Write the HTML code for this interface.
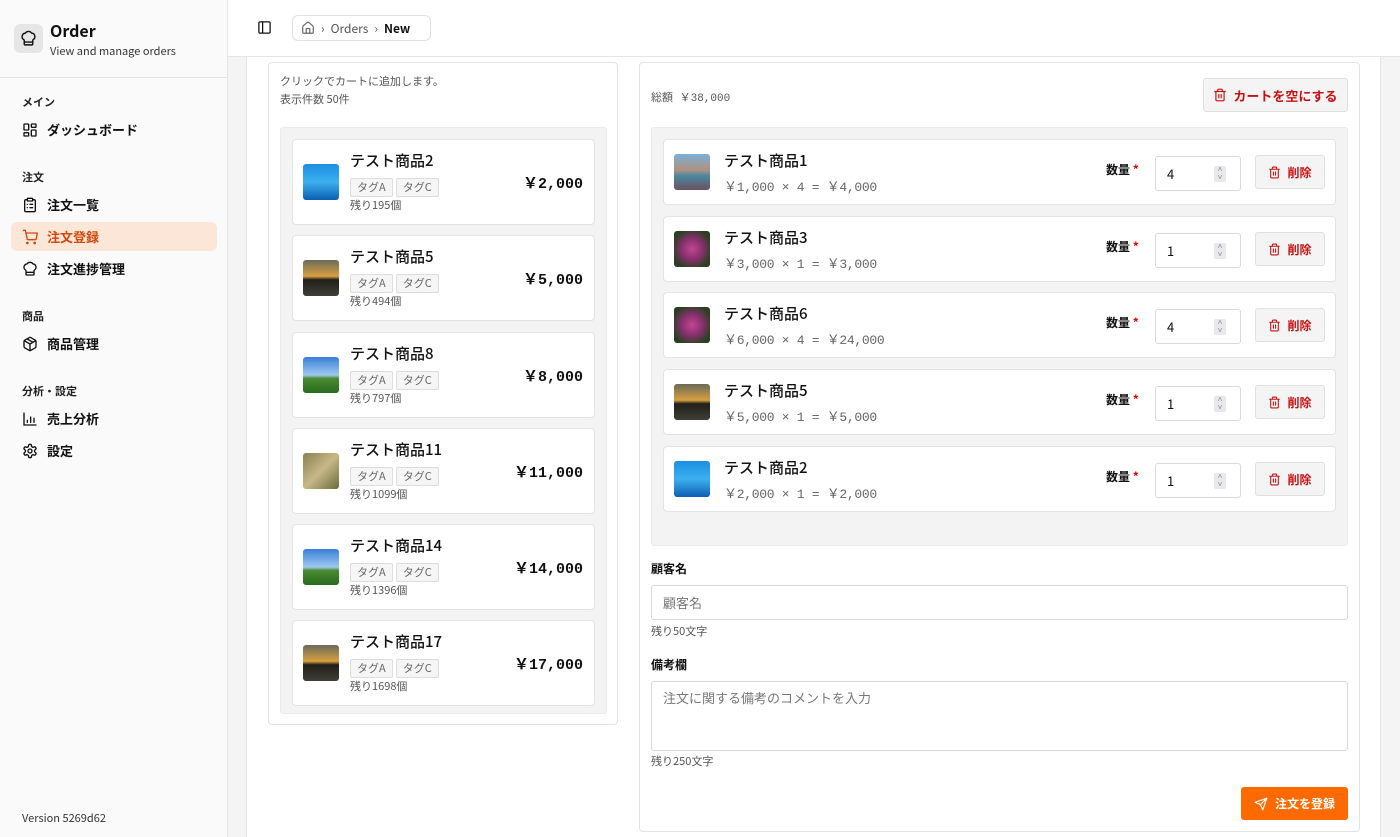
<!DOCTYPE html>
<html><head><meta charset="utf-8"><style>
*{box-sizing:border-box;margin:0;padding:0}
body{width:1400px;height:837px;overflow:hidden;font-family:"Noto Sans CJK JP","Liberation Sans",sans-serif;color:#111;background:#f4f4f4;position:relative;font-size:13px}
.a{position:absolute}
.mono{font-family:"Liberation Mono","Noto Sans CJK JP",monospace}
#side{left:0;top:0;width:228px;height:837px;background:#fafafa;border-right:1px solid #e5e5e5}
.sec{position:absolute;left:22px;font-size:11px;font-weight:bold;color:#222}
.nav{position:absolute;left:11px;width:206px;height:29px;display:flex;align-items:center;padding-left:11px;font-size:13px;font-weight:bold;gap:9px}
.nav svg{width:16px;height:16px}
#head{left:228px;top:0;width:1172px;height:57px;background:#fff;border-bottom:1px solid #e5e5e5}
#panel{left:246px;top:57px;width:1135px;height:780px;background:#fff;border-left:1px solid #e5e5e5;border-right:1px solid #e5e5e5}
.card{background:#fff;border:1px solid #e3e3e3;border-radius:4px}
.gray{background:#f3f3f3;border:1px solid #ebebeb;border-radius:3px}
.pi{left:292px;width:303px;height:86px}
.img{width:36px;height:36px;border-radius:3px}
.tag{display:inline-block;border:1px solid #ddd;background:#f5f5f5;border-radius:2px;font-size:11px;color:#666;padding:0 6px;height:19px;line-height:17px;margin-right:3px}
.ci{left:663px;width:673px;height:66px}
.qty{border:1px solid #d9d9d9;border-radius:3px;width:86px;height:35px;background:#fff}
.del{border:1px solid #e0e0e0;background:#f4f4f4;border-radius:3px;width:70px;height:34px;color:#c81010;font-weight:bold;font-size:12px;display:flex;align-items:center;justify-content:center;gap:6px}
.nm{font-size:15px;font-weight:500;line-height:20px}
</style></head><body>
<div id="side" class="a">
 <div class="a" style="left:14px;top:24px;width:29px;height:29px;background:#e6e6e6;border-radius:6px"></div>
 <svg class="a" style="left:20px;top:30px" width="17" height="17" viewBox="0 0 24 24" fill="none" stroke="#111" stroke-width="2" stroke-linecap="round" stroke-linejoin="round"><path d="M17 21a1 1 0 0 0 1-1v-5.35c0-.46.3-.85.7-1.1a5 5 0 0 0-2.3-9.2A5 5 0 0 0 12 2a5 5 0 0 0-4.4 2.4 5 5 0 0 0-2.3 9.2c.4.25.7.64.7 1.1V20a1 1 0 0 0 1 1z"/><path d="M6 17h12"/></svg>
 <div class="a" style="left:50px;top:18px;font-size:16px;font-weight:bold">Order</div>
 <div class="a" style="left:50px;top:43px;font-size:11px;color:#333">View and manage orders</div>
 <div class="a" style="left:0;top:77px;width:228px;border-top:1px solid #e5e5e5"></div>
 <div class="sec" style="top:94px">メイン</div>
 <div class="nav" style="top:115px"><svg viewBox="0 0 24 24" fill="none" stroke="#111" stroke-width="2"><rect x="3" y="3" width="7" height="9" rx="1"/><rect x="14" y="3" width="7" height="5" rx="1"/><rect x="14" y="12" width="7" height="9" rx="1"/><rect x="3" y="16" width="7" height="5" rx="1"/></svg>ダッシュボード</div>
 <div class="sec" style="top:169px">注文</div>
 <div class="nav" style="top:190px"><svg viewBox="0 0 24 24" fill="none" stroke="#111" stroke-width="2" stroke-linecap="round"><rect x="8" y="2" width="8" height="4" rx="1"/><path d="M16 4h2a2 2 0 0 1 2 2v14a2 2 0 0 1-2 2H6a2 2 0 0 1-2-2V6a2 2 0 0 1 2-2h2M12 11h4M12 16h4M8 11h.01M8 16h.01"/></svg>注文一覧</div>
 <div class="nav" style="top:222px;background:#fbe6d8;border-radius:6px;color:#d4480c"><svg viewBox="0 0 24 24" fill="none" stroke="#d4480c" stroke-width="2" stroke-linecap="round" stroke-linejoin="round"><circle cx="8" cy="21" r="1"/><circle cx="19" cy="21" r="1"/><path d="M2 2h3l2.7 12.4a2 2 0 0 0 2 1.6h9.7a2 2 0 0 0 2-1.6L23 6H6"/></svg>注文登録</div>
 <div class="nav" style="top:254px"><svg viewBox="0 0 24 24" fill="none" stroke="#111" stroke-width="2" stroke-linejoin="round"><path d="M17 21a1 1 0 0 0 1-1v-5.35c0-.46.3-.85.7-1.1a5 5 0 0 0-2.3-9.2A5 5 0 0 0 12 2a5 5 0 0 0-4.4 2.4 5 5 0 0 0-2.3 9.2c.4.25.7.64.7 1.1V20a1 1 0 0 0 1 1z"/><path d="M6 17h12"/></svg>注文進捗管理</div>
 <div class="sec" style="top:308px">商品</div>
 <div class="nav" style="top:329px"><svg viewBox="0 0 24 24" fill="none" stroke="#111" stroke-width="2" stroke-linejoin="round"><path d="M21 8a2 2 0 0 0-1-1.7l-7-4a2 2 0 0 0-2 0l-7 4A2 2 0 0 0 3 8v8a2 2 0 0 0 1 1.7l7 4a2 2 0 0 0 2 0l7-4a2 2 0 0 0 1-1.7z"/><path d="M3.3 7 12 12l8.7-5M12 22V12M7.5 4.3l9 5.2"/></svg>商品管理</div>
 <div class="sec" style="top:383px">分析・設定</div>
 <div class="nav" style="top:404px"><svg viewBox="0 0 24 24" fill="none" stroke="#111" stroke-width="2" stroke-linecap="round"><path d="M3 3v18h18M8 17v-3M13 17V9M18 17v-6"/></svg>売上分析</div>
 <div class="nav" style="top:436px"><svg viewBox="0 0 24 24" fill="none" stroke="#111" stroke-width="2"><path d="M12.2 2h-.4a2 2 0 0 0-2 2v.2a2 2 0 0 1-1 1.7l-.4.3a2 2 0 0 1-2 0l-.2-.1a2 2 0 0 0-2.7.7l-.2.4a2 2 0 0 0 .7 2.7l.2.1a2 2 0 0 1 1 1.7v.5a2 2 0 0 1-1 1.8l-.2.1a2 2 0 0 0-.7 2.7l.2.4a2 2 0 0 0 2.7.7l.2-.1a2 2 0 0 1 2 0l.4.3a2 2 0 0 1 1 1.7v.2a2 2 0 0 0 2 2h.4a2 2 0 0 0 2-2v-.2a2 2 0 0 1 1-1.7l.4-.3a2 2 0 0 1 2 0l.2.1a2 2 0 0 0 2.7-.7l.2-.4a2 2 0 0 0-.7-2.7l-.2-.1a2 2 0 0 1-1-1.8v-.5a2 2 0 0 1 1-1.7l.2-.1a2 2 0 0 0 .7-2.7l-.2-.4a2 2 0 0 0-2.7-.7l-.2.1a2 2 0 0 1-2 0l-.4-.3a2 2 0 0 1-1-1.7V4a2 2 0 0 0-2-2z"/><circle cx="12" cy="12" r="3"/></svg>設定</div>
 <div class="a" style="left:22px;top:810px;font-size:11px;color:#333">Version 5269d62</div>
</div>
<div id="head" class="a">
 <svg class="a" style="left:29px;top:20px" width="15" height="15" viewBox="0 0 24 24" fill="none" stroke="#111" stroke-width="2"><rect x="3" y="3" width="18" height="18" rx="2"/><path d="M9 3v18"/></svg>
 <div class="a" style="left:64px;top:15px;width:139px;height:26px;border:1px solid #e0e0e0;border-radius:6px;display:flex;align-items:center;padding-left:8px;gap:6px;font-size:12px;color:#555">
  <svg width="14" height="14" viewBox="0 0 24 24" fill="none" stroke="#666" stroke-width="2"><path d="M15 21v-8H9v8"/><path d="M3 10a2 2 0 0 1 .7-1.5l7-6a2 2 0 0 1 2.6 0l7 6a2 2 0 0 1 .7 1.5V19a2 2 0 0 1-2 2H5a2 2 0 0 1-2-2z"/></svg>
  <span>›</span><span>Orders</span><span>›</span><b style="color:#111">New</b></div>
</div>
<div id="panel" class="a"></div>

<div class="a card" style="left:268px;top:62px;width:350px;height:663px"></div>
<div class="a" style="left:280px;top:72px;font-size:11px;color:#555;line-height:18px">クリックでカートに追加します。<br>表示件数 50件</div>
<div class="a gray" style="left:280px;top:127px;width:327px;height:587px"></div>

<div id="plist"></div>
<script>
var ps=[["テスト商品2","残り195個","￥2,000","linear-gradient(180deg,#1a8fe0,#3db0f0 50%,#0a5fb0)"],
["テスト商品5","残り494個","￥5,000","linear-gradient(180deg,#6a6a5a,#d8a040 45%,#202018 55%,#403e38)"],
["テスト商品8","残り797個","￥8,000","linear-gradient(180deg,#3a7ed8,#9cc8f0 50%,#4a8a30 60%,#2a6a20)"],
["テスト商品11","残り1099個","￥11,000","linear-gradient(135deg,#8a8050,#c8b888 50%,#6a6a3a)"],
["テスト商品14","残り1396個","￥14,000","linear-gradient(180deg,#3a7ed8,#9cc8f0 50%,#4a8a30 60%,#2a6a20)"],
["テスト商品17","残り1698個","￥17,000","linear-gradient(180deg,#6a6a5a,#d8a040 45%,#202018 55%,#403e38)"]];
var pt=[139,235,332,428,524,620],s="";
ps.forEach(function(p,i){var t=pt[i];
s+='<div class="a card pi" style="top:'+t+'px"></div>'+
'<div class="a img" style="left:303px;top:'+(t+25)+'px;background:'+p[3]+'"></div>'+
'<div class="a nm" style="left:350px;top:'+(t+12)+'px">'+p[0]+'</div>'+
'<div class="a" style="left:350px;top:'+(t+37)+'px"><span class="tag">タグA</span><span class="tag">タグC</span></div>'+
'<div class="a" style="left:350px;top:'+(t+58)+'px;font-size:11px;color:#555">'+p[1]+'</div>'+
'<div class="a mono" style="right:817px;top:'+(t+33)+'px;font-size:15px;font-weight:bold">'+p[2]+'</div>';});
document.getElementById("plist").innerHTML=s;
</script>

<div class="a card" style="left:639px;top:62px;width:721px;height:770px"></div>
<div class="a mono" style="left:651px;top:89px;font-size:11px;color:#555">総額 ￥38,000</div>
<div class="a del" style="left:1203px;top:78px;width:145px;height:34px;font-size:13px"><svg width="14" height="14" viewBox="0 0 24 24" fill="none" stroke="#c81010" stroke-width="2" stroke-linecap="round"><path d="M3 6h18M19 6v14a2 2 0 0 1-2 2H7a2 2 0 0 1-2-2V6M8 6V4a2 2 0 0 1 2-2h4a2 2 0 0 1 2 2v2M10 11v6M14 11v6"/></svg>カートを空にする</div>
<div class="a gray" style="left:651px;top:127px;width:697px;height:419px"></div>

<div id="cart"></div>
<script>
var items=[["テスト商品1","￥1,000 × 4 = ￥4,000","4","linear-gradient(180deg,#7ab0d8,#b09080 45%,#4a8aa0 60%,#6a5060)"],
["テスト商品3","￥3,000 × 1 = ￥3,000","1","radial-gradient(circle at 50% 50%,#c04890,#8a3070 40%,#2a4020 80%)"],
["テスト商品6","￥6,000 × 4 = ￥24,000","4","radial-gradient(circle at 50% 50%,#c04890,#8a3070 40%,#2a4020 80%)"],
["テスト商品5","￥5,000 × 1 = ￥5,000","1","linear-gradient(180deg,#6a6a5a,#d8a040 45%,#202018 55%,#403e38)"],
["テスト商品2","￥2,000 × 1 = ￥2,000","1","linear-gradient(180deg,#1a8fe0,#3db0f0 50%,#0a5fb0)"]];
var tops=[139,216,292,369,446],h="";
var tr='<svg width="13" height="13" viewBox="0 0 24 24" fill="none" stroke="#c81010" stroke-width="2" stroke-linecap="round"><path d="M3 6h18M19 6v14a2 2 0 0 1-2 2H7a2 2 0 0 1-2-2V6M8 6V4a2 2 0 0 1 2-2h4a2 2 0 0 1 2 2v2M10 11v6M14 11v6"/></svg>';
items.forEach(function(it,i){var t=tops[i];
h+='<div class="a card ci" style="top:'+t+'px"></div>'+
'<div class="a img" style="left:674px;top:'+(t+15)+'px;background:'+it[3]+'"></div>'+
'<div class="a nm" style="left:724px;top:'+(t+12)+'px">'+it[0]+'</div>'+
'<div class="a mono" style="left:724px;top:'+(t+37)+'px;font-size:13px;color:#666;letter-spacing:-0.3px">'+it[1]+'</div>'+
'<div class="a" style="left:1106px;top:'+(t+22)+'px;font-size:12px;font-weight:bold">数量 <span style="color:#e00">*</span></div>'+
'<div class="a qty" style="left:1155px;top:'+(t+17)+'px"><span class="a" style="left:11px;top:7px;font-size:13px">'+it[2]+'</span><span class="a" style="left:58px;top:9px;width:12px;height:16px;background:#e8e8ec;border-radius:2px;font-size:8px;color:#888;text-align:center;line-height:8px">˄<br>˅</span></div>'+
'<div class="a del" style="left:1255px;top:'+(t+16)+'px">'+tr+'削除</div>';});
document.getElementById("cart").innerHTML=h;
</script>

<div class="a" style="left:651px;top:560px;font-size:12px;font-weight:bold">顧客名</div>
<div class="a" style="left:651px;top:585px;width:697px;height:35px;border:1px solid #d9d9d9;border-radius:3px;font-size:13px;color:#777;padding:7px 11px">顧客名</div>
<div class="a" style="left:651px;top:623px;font-size:11px;color:#555">残り50文字</div>
<div class="a" style="left:651px;top:656px;font-size:12px;font-weight:bold">備考欄</div>
<div class="a" style="left:651px;top:681px;width:697px;height:70px;border:1px solid #d9d9d9;border-radius:3px;font-size:13px;color:#777;padding:6px 11px">注文に関する備考のコメントを入力</div>
<div class="a" style="left:651px;top:753px;font-size:11px;color:#555">残り250文字</div>
<div class="a" style="left:1241px;top:787px;width:107px;height:33px;background:#ff6a00;border-radius:3px;color:#fff;font-weight:bold;font-size:12px;display:flex;align-items:center;justify-content:center;gap:7px"><svg width="14" height="14" viewBox="0 0 24 24" fill="none" stroke="#fff" stroke-width="2" stroke-linejoin="round"><path d="M22 2 11 13M22 2l-7 20-4-9-9-4z"/></svg>注文を登録</div>
</body></html>
